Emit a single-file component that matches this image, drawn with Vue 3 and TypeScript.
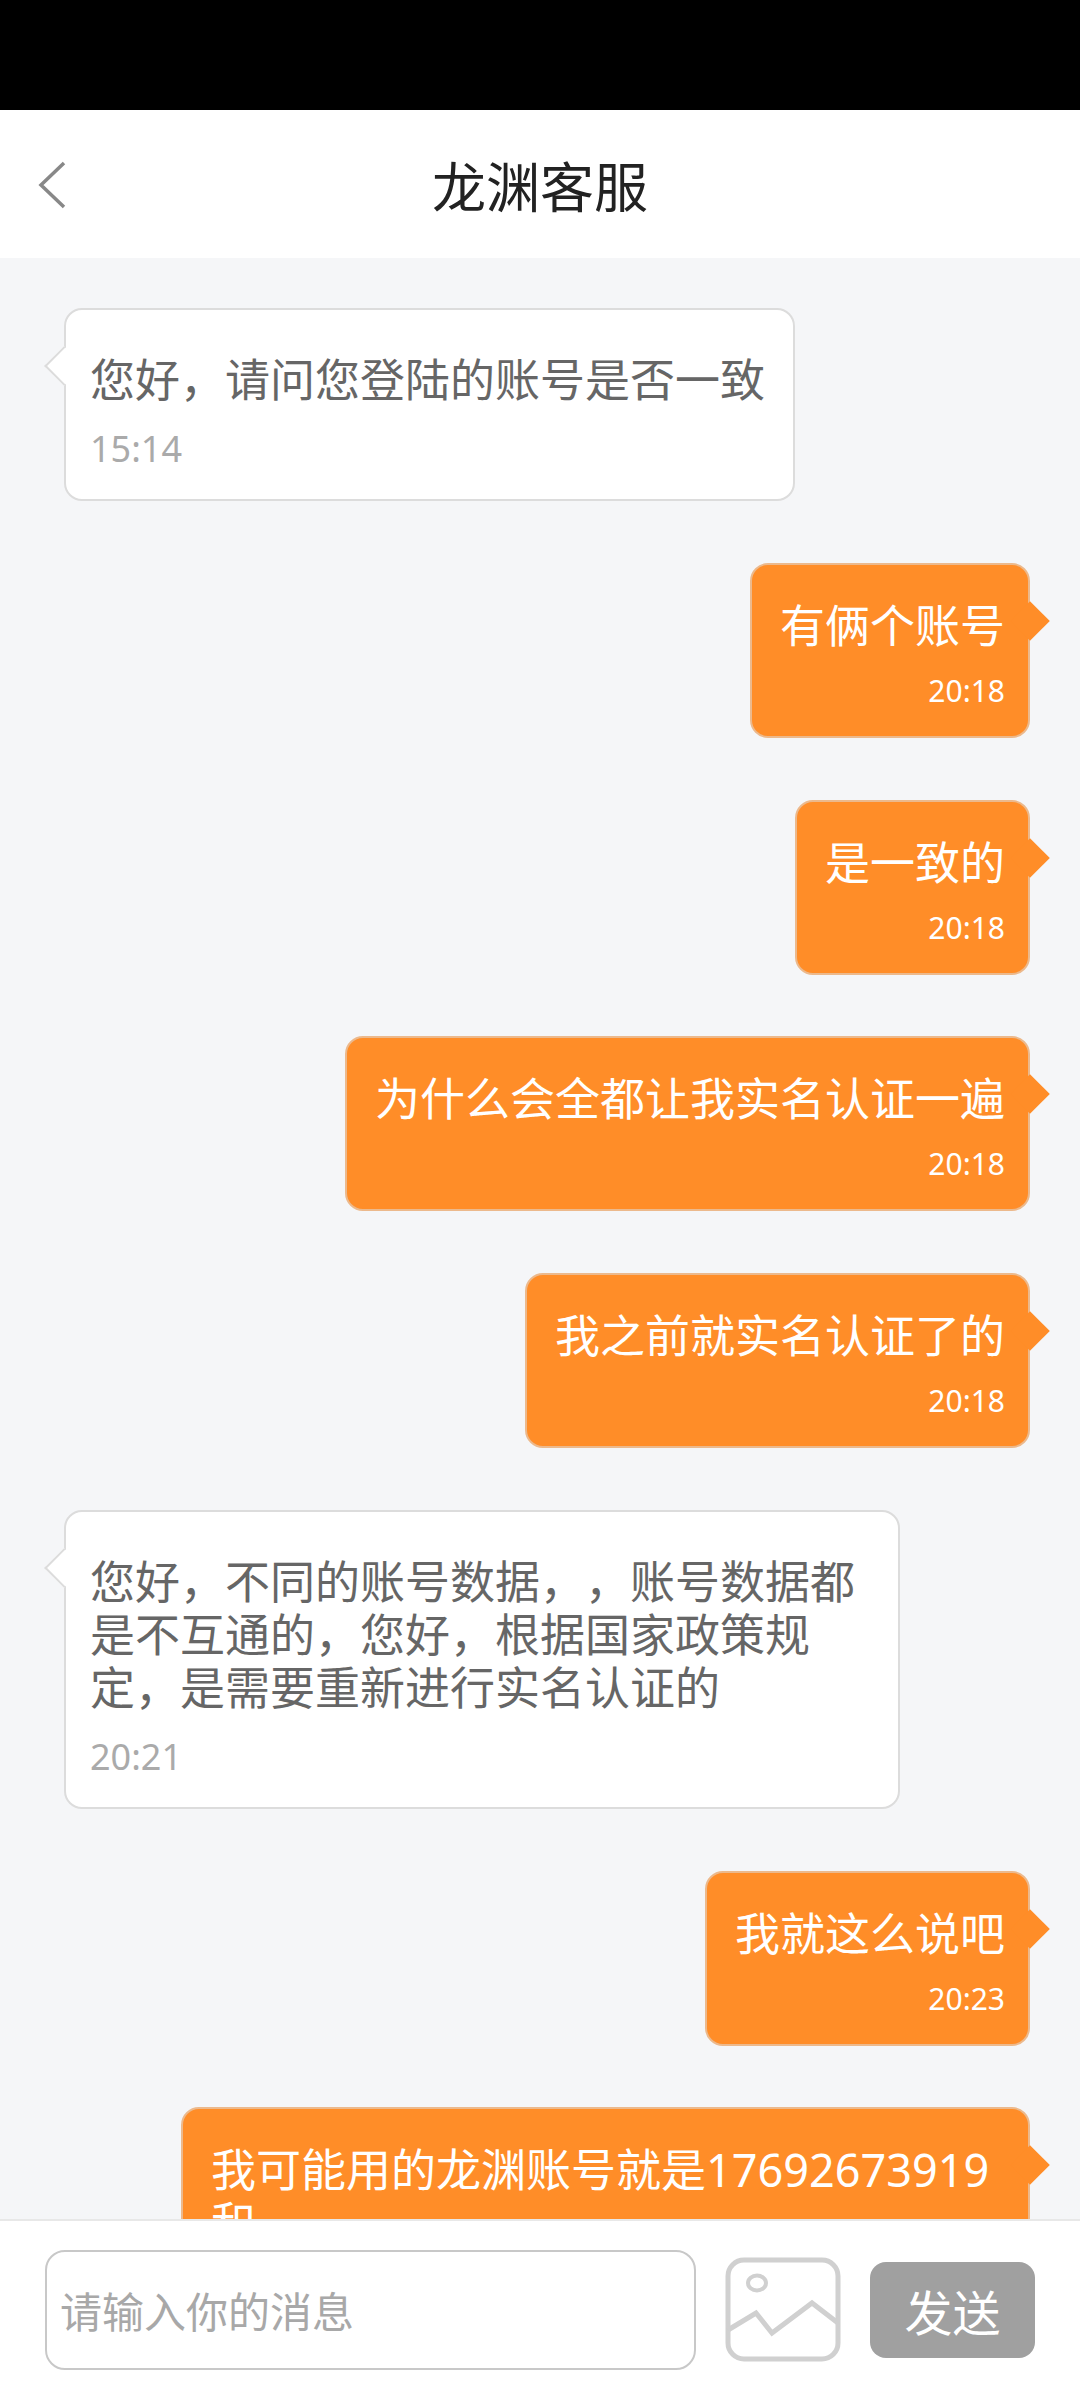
<script setup lang="ts">
interface Message {
  id: number
  mine: boolean
  text: string
  time: string
}

const messages: Message[] = [
  { id: 1, mine: false, text: '您好，请问您登陆的账号是否一致', time: '15:14' },
  { id: 2, mine: true, text: '有俩个账号', time: '20:18' },
  { id: 3, mine: true, text: '是一致的', time: '20:18' },
  { id: 4, mine: true, text: '为什么会全都让我实名认证一遍', time: '20:18' },
  { id: 5, mine: true, text: '我之前就实名认证了的', time: '20:18' },
  {
    id: 6,
    mine: false,
    text: '您好，不同的账号数据，，账号数据都是不互通的，您好，根据国家政策规定，是需要重新进行实名认证的',
    time: '20:21',
  },
  { id: 7, mine: true, text: '我就这么说吧', time: '20:23' },
  { id: 8, mine: true, text: '我可能用的龙渊账号就是17692673919和', time: '20:23' },
]
</script>

<template>
  <div class="page">
    <div class="status-bar"></div>

    <header class="header">
      <svg class="back" viewBox="0 0 30 48" aria-hidden="true">
        <path d="M26 2 L3 24 L26 46" fill="none" stroke="#888" stroke-width="3.5" />
      </svg>
      <h1 class="title">龙渊客服</h1>
    </header>

    <main class="messages">
      <div
        v-for="msg in messages"
        :key="msg.id"
        class="bubble"
        :class="msg.mine ? 'mine' : 'theirs'"
      >
        <p class="text">{{ msg.text }}</p>
        <p class="time">{{ msg.time }}</p>
      </div>
    </main>

    <footer class="footer">
      <div class="input">请输入你的消息</div>
      <svg class="picture" viewBox="0 0 116 105" aria-hidden="true">
        <rect x="3" y="3" width="110" height="99" rx="16" fill="none" stroke="#d0d0d0" stroke-width="5" />
        <ellipse cx="32" cy="26" rx="9" ry="7.5" fill="none" stroke="#d0d0d0" stroke-width="4" />
        <path d="M3 73 L31 56 L47 76 L87 46 L113 66" fill="none" stroke="#d0d0d0" stroke-width="5" />
      </svg>
      <button class="send" type="button">发送</button>
    </footer>
  </div>
</template>

<style scoped>
.page {
  width: 1080px;
  height: 2400px;
  display: flex;
  flex-direction: column;
  overflow: hidden;
  background: #f5f6f8;
  font-family: "Noto Sans", "Noto Sans CJK SC", sans-serif;
}

.status-bar {
  height: 110px;
  flex-shrink: 0;
  background: #000;
}

.header {
  position: relative;
  height: 148px;
  flex-shrink: 0;
  box-sizing: border-box;
  padding-top: 5px;
  display: flex;
  align-items: center;
  justify-content: center;
  background: #fff;
}

.back {
  position: absolute;
  left: 38px;
  top: 51px;
  width: 30px;
  height: 48px;
}

.title {
  margin: 0;
  font-size: 54px;
  font-weight: 400;
  line-height: 72px;
  color: #222;
}

.messages {
  flex: 1;
  min-height: 0;
  overflow: hidden;
  display: flex;
  flex-direction: column;
  gap: 61.75px;
  padding: 50px 50px 0 64px;
}

.bubble {
  position: relative;
  flex-shrink: 0;
  box-sizing: border-box;
  width: fit-content;
  border-radius: 18px;
  border: 2px solid;
}

.bubble::after {
  content: "";
  position: absolute;
  top: 42px;
  width: 28px;
  height: 28px;
  box-sizing: border-box;
  transform: rotate(45deg);
}

.theirs {
  max-width: 836px;
  padding: 43px 28px 30px 24px;
  align-self: flex-start;
  background: #fff;
  border-color: #dcdcdc;
}

.theirs::after {
  left: -16px;
  background: #fff;
  border-left: 2px solid #dcdcdc;
  border-bottom: 2px solid #dcdcdc;
}

.mine {
  max-width: 849px;
  padding: 34px 23px 25px 28px;
  align-self: flex-end;
  background: #ff8d28;
  border-color: #ecb98c;
}

.mine::after {
  right: -16px;
  background: #ff8d28;
}

.text {
  margin: 0;
  font-size: 45px;
  line-height: 53px;
  text-spacing-trim: space-all;
}

.theirs .text {
  color: #666;
}

.mine .text {
  color: #fff;
}

.time {
  margin: 0;
  line-height: 40px;
}

.theirs .time {
  margin-top: 23px;
  font-size: 36px;
  color: #aaa;
}

.mine .time {
  margin-top: 19px;
  font-size: 30px;
  color: #fff;
  text-align: right;
}

.footer {
  position: relative;
  height: 181px;
  flex-shrink: 0;
  box-sizing: border-box;
  display: flex;
  align-items: center;
  padding: 0 0 2px 45px;
  background: #fff;
  border-top: 2px solid #e8e8e8;
}

.input {
  box-sizing: border-box;
  width: 651px;
  height: 120px;
  display: flex;
  align-items: center;
  padding-left: 13px;
  border: 2px solid #c8c8c8;
  border-radius: 20px;
  font-size: 42px;
  color: #a8a8a8;
}

.picture {
  width: 116px;
  height: 105px;
  margin-left: 29px;
}

.send {
  width: 165px;
  height: 96px;
  margin-left: 29px;
  padding: 0;
  border: none;
  border-radius: 16px;
  background: #a0a0a0;
  color: #fff;
  font-family: inherit;
  font-size: 48px;
}
</style>
